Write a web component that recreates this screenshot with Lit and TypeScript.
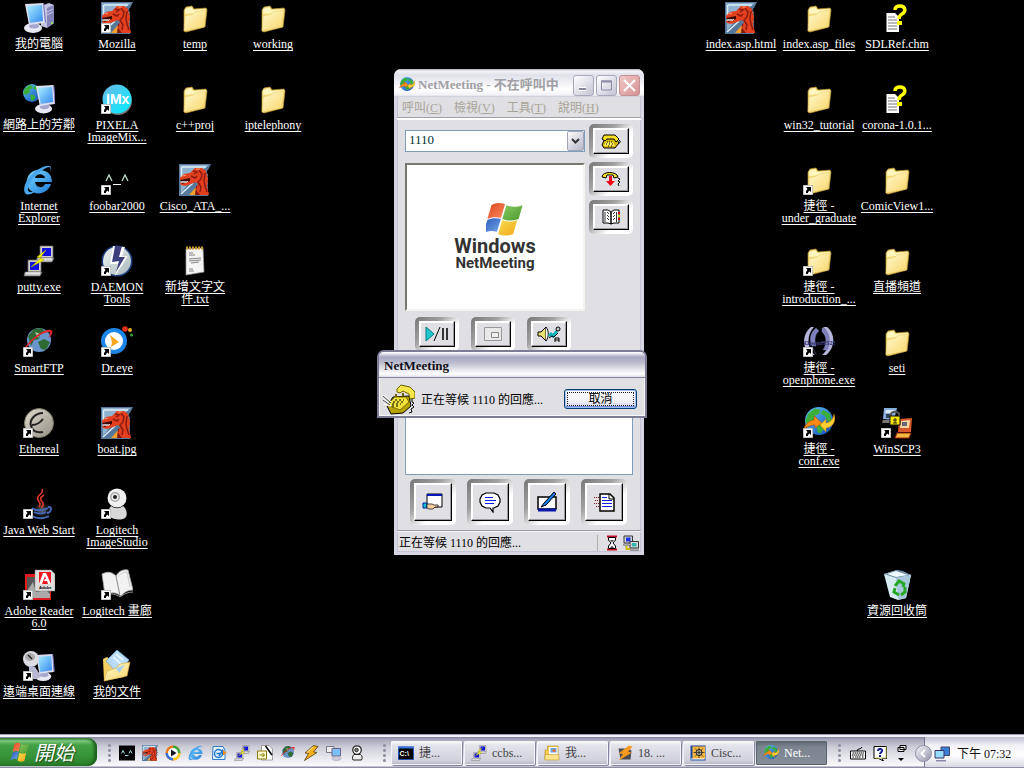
import { LitElement, html, svg, css, nothing, SVGTemplateResult } from "lit";
import { customElement, state } from "lit/decorators.js";

/* ---------- icon artwork, drawn on a 32 x 32 grid ---------- */

const monitor = (x: number, y: number, s: number) => svg`
  <g transform="translate(${x} ${y}) scale(${s})">
    <ellipse cx="9" cy="25" rx="9" ry="5" fill="#e9e9f4"/>
    <ellipse cx="10" cy="23" rx="5" ry="2.500" fill="#a6a6cc"/>
    <path d="M1 1l19-1 1 20-16 2z" fill="#dedef2"/>
    <path d="M3 3l15-1 1 16-13 2z" fill="url(#screen)"/>
    <path d="M19 0l1 0 2 19-1 1z" fill="#7474b8"/>
  </g>`;

const dragon = svg`
  <path d="M0 0h32l-3 6v26H0z" fill="#56789a"/>
  <path d="M1 1h29L13 15 2 29z" fill="#8fb2d0"/>
  <path d="M3 3h24M2.500 3v17M2 30L14 19" stroke="#dcecf8" stroke-width="1.500" fill="none"/>
  <path d="M10 31l8-9 11 4v5z" fill="#f6a02c"/>
  <path d="M16 31l1-9 10-3 3 12z" fill="#7e1a10"/>
  <path d="M1 14l4-4 6-1 5-5 7 0 4 3 2 8-1 8 2 8-9 0-4-5 2-6-2-2-5 2-6 2-4-1-1-2 6-2 1-2-5 1-2 0z" fill="#e2401f"/>
  <path d="M1 16l10-2 0 3-8 3z" fill="#3a0806"/>
  <path d="M2 17l1 2 1-2 1 2 1-2 1 2 1-2 1 1" stroke="#fff" stroke-width=".8" fill="none"/>
  <path d="M14 7l4 1-3 2M20 6l3 4-1 5-3 3 3 5-1 5M26 9l-1 8 1 5 2 6M12 12l4 2 2-2" stroke="#8c1a10" stroke-width="1.500" fill="none"/>
  <path d="M4 12l3-1M17 5l4 0" stroke="#ff9a70" stroke-width="1"/>
  <path d="M29 6l-1 3 2 1-1 3 2 1-2 3 1 2-1 3" stroke="#000" fill="none"/>`;

const folder = svg`
  <path d="M5 29L5 8l2-3 6-1 2 3 12-1 1 2-2 17-19 5z" fill="#f7dc7c" stroke="#b8902c" stroke-width=".7"/>
  <path d="M6 7l6-2 2 3 13-1v3L6 12z" fill="#fff6c0"/>
  <path d="M5 29l1-15 8-2 2-2 11-2-2 17z" fill="url(#fold)" stroke="#e8c45c" stroke-width=".5"/>`;

const globe = (x: number, y: number, r: number) => svg`
  <g transform="translate(${x} ${y}) scale(${r / 10})">
    <circle r="10" fill="url(#sea)"/>
    <path d="M-8-5l5-4 4 1-1 3-3 1 1 3-4 3-4-1zM-2 2l4 0 2 3-3 4-2-1zM3-8l5 3 1 6-3-1-2-4-3-1z" fill="#3cae3a"/>
  </g>`;

const pc = (x: number, y: number) => svg`
  <path d="M${x + 3} ${y}h13v12h-13z" fill="#d4d0c8" stroke="#666" stroke-width=".7"/>
  <path d="M${x + 5} ${y + 2}h9v8h-9z" fill="#1010e0"/>
  <path d="M${x} ${y + 12}h17l-2 4H${x - 1}z" fill="#c8c8c8" stroke="#666" stroke-width=".7"/>
  <path d="M${x + 1} ${y + 13}h14" stroke="#fff"/>`;

const flag = svg`
  <path d="M7 3c4-3 7-2 10-1l-3 13c-3-1-7-1-10 1z" fill="url(#flagR)"/>
  <path d="M18 3c4 2 8 2 12 0l-3 13c-4 2-8 2-12 0z" fill="url(#flagG)"/>
  <path d="M4 17c3-2 7-2 10-1l-3 12c-3-1-6-1-10 1z" fill="url(#flagB)"/>
  <path d="M15 17c4 2 8 2 11 0l-3 13c-3 2-7 2-11 0z" fill="url(#flagY)"/>`;

const ART: Record<string, SVGTemplateResult> = {
  dragon,
  folder,
  flag,
  computer: svg`
    <path d="M18 4l8-3 5 2v18l-7 5-6-2z" fill="#c4c4e4"/>
    <path d="M24 6l7-3v18l-7 5z" fill="#8484b8"/>
    <path d="M24 10l6-3M24 13l6-3" stroke="#c8c8ec"/><circle cx="29" cy="21" r="1" fill="#9f4"/>
    ${monitor(1, 1, 1)}`,
  network: svg`${globe(9, 10, 9)}${monitor(12, 2, 0.95)}`,
  ie: svg`
    <path d="M29 18H12c1 6 8 7 10 2h6c-3 9-13 12-20 7C0 20 4 6 16 6c9 0 13 5 13 12zM12 14h10c-1-5-9-5-10 0z" fill="url(#ieb)" fill-rule="evenodd"/>
    <path d="M27 8c4-8-3-8-13-2C4 13-1 24 2 29c2 3 7 1 11-2-5 2-9 1-8-3C7 15 20 4 26 3c2 0 2 2 1 5z" fill="#4aa6ec"/>`,
  putty: svg`${pc(14, 1)}${pc(2, 15)}<path d="M23 5l-9 7 4 1-10 9 13-7-4-2z" fill="#ff0" stroke="#a8a800" stroke-width=".6"/>`,
  smartftp: svg`<circle cx="16" cy="14" r="12" fill="#6a94cc"/>
    <path d="M5 10l6-7 8-1 3 4-5 2-1 5-5 1-3 6zM15 16l6-3 6 3-4 8-5-1z" fill="#2f6a34"/>
    <path d="M12 6l5 2-2 4z" fill="#b6cfa8"/>
    <path d="M2 21C8 13 21 2 28 4c3 1 1 6-3 8 2-3 3-6 1-6C18 6 9 15 3 22z" fill="#e02428"/>`,
  ethereal: svg`<circle cx="16" cy="16" r="14.500" fill="url(#stone)" stroke="#776" stroke-width="1"/>
    <path d="M20 6C12 6 6 13 8 19c2 6 7 7 12 6" fill="none" stroke="#222" stroke-width="2"/>
    <path d="M9 18c5 0 8-2 11-6" fill="none" stroke="#222" stroke-width="2"/>`,
  java: svg`<ellipse cx="19" cy="22" rx="11" ry="10" fill="url(#glow)"/>
    <path d="M19 1c3 5-7 6-4 11 2 3 3 4 1 7M21 7c-6 4-3 5-1 8 1 2-1 4-2 4" fill="none" stroke="#e0382e" stroke-width="1.600"/>
    <path d="M9 20c3 3 12 3 16 0M11 24c3 2 9 2 12 0M9 28c5 3 12 3 17 0M25 19c5-1 3 6-1 6" fill="none" stroke="#4467b8" stroke-width="2"/>`,
  adobe: svg`<path d="M2 5h26v26H2z" fill="#e21a1c"/><path d="M4 8h23v21H4z" fill="#555"/>
    <path d="M4 22l6-9 3 10 10-2 4 4v4H4z" fill="#aaa"/>
    <path d="M12 1h16l4 4v17H12z" fill="#ddd" stroke="#888" stroke-width=".5"/>
    <path d="M16 3h12v12H16z" fill="#f01820"/>
    <path d="M20 4h3l5 11h-3l-1-3h-3l1-2h1l-1-3-3 8h-3z" fill="#fff"/>
    <text x="16" y="20" font-family="Liberation Sans" font-weight="700" font-size="4" fill="#000">Adobe</text>`,
  remote: svg`${monitor(12, 4, 0.9)}
    <ellipse cx="8" cy="9" rx="8" ry="8" fill="#dcdce4"/><ellipse cx="7" cy="7" rx="5" ry="4" fill="#aaa"/>
    <path d="M5 5l4 4" stroke="#222" stroke-width="1.500"/><path d="M6 16l6 1 6 9c-3 4-9 4-12 1z" fill="#b8b8d4"/>`,
  imx: svg`<circle cx="17" cy="18" r="14" fill="#777"/><circle cx="16" cy="16" r="14.500" fill="url(#cy)"/>
    <text x="5" y="21" font-family="Liberation Sans" font-weight="700" font-size="14" fill="#fff">IMx</text>`,
  foobar: svg`<path d="M5 17l3-6 3 6M21 17l3-6 3 6" fill="none" stroke="#b8dcc8" stroke-width="1.300"/><path d="M12 20.500h8" stroke="#fff"/>`,
  daemon: svg`<circle cx="16" cy="16" r="15.500" fill="#1d3f80"/><circle cx="16" cy="16" r="14" fill="url(#disc)"/>
    <path d="M12 1l12 1-3 9 6 0L14 31l3-12-8 0z" fill="#fff"/>
    <path d="M14 1h7l-3 11 6 0L15 27l3-11-7 1z" fill="#3c3f7c"/>`,
  dreye: svg`<circle cx="13" cy="15" r="13" fill="#1c86e8"/><circle cx="13" cy="15" r="9" fill="#fff"/>
    <path d="M9 9l9 7-8 5 1-5z" fill="#f4a81c"/><circle cx="24" cy="3" r="2.800" fill="#e83018"/><circle cx="29" cy="4" r="2" fill="#e8b020"/><circle cx="30.500" cy="9" r="1.500" fill="#40a840"/>`,
  webcam: svg`<path d="M10 18c4 3 8 3 12 0 4 3 5 10 2 12-5 3-12 1-15-1-2-4-2-8 1-11z" fill="#d8d8d8"/>
    <circle cx="16" cy="10" r="9.500" fill="#f0f0f0"/><circle cx="14" cy="9" r="5" fill="#aaa"/><circle cx="14" cy="9" r="3.500" fill="#eee"/><circle cx="14" cy="9" r="2" fill="#222"/>`,
  webcamSmall: svg`<path d="M10 19h13c4 3 4 7 2 11H8c-2-4-1-8 2-11z" fill="#eee" stroke="#222" stroke-width="2"/>
    <circle cx="16" cy="10" r="8.500" fill="#fff" stroke="#222" stroke-width="2.500"/><circle cx="15" cy="10" r="3.500" fill="#888" stroke="#222" stroke-width="2"/>`,
  book: svg`<path d="M1 5c6-3 10-2 14 2 3-5 7-7 12-6l5 20c-5 0-9 2-12 6-5-4-10-4-16-1z" fill="#f2f2f2" stroke="#aaa" stroke-width=".8"/>
    <path d="M15 7l4 20" stroke="#888"/><path d="M17 8c3-4 6-5 9-5l3 15" fill="none" stroke="#ccc"/>
    <path d="M4 26c7-2 11-1 15 2 4-3 8-5 13-5" fill="none" stroke="#999"/>`,
  documents: svg`<path d="M2 9l4-2 3 2 16 3-2 15L3 31z" fill="#f4cf62"/>
    <path d="M16 0l12 10-11 14L5 11z" fill="#b8dcf8" stroke="#78a8d8" stroke-width=".8"/>
    <path d="M15 4l7 6M12 7l8 7" stroke="#e8f6ff" stroke-width="2"/>
    <path d="M3 31l3-10 9-3 4-4 10-2-3 14z" fill="url(#fold)" stroke="#d8aa40" stroke-width=".6"/>
    <path d="M15 18l9-3-6 8z" fill="#a8d0f4"/>`,
  notepad: svg`<path d="M7 4l17-1 1 24-18 3z" fill="#f4f4f4" stroke="#999" stroke-width=".7"/>
    <path d="M7 3h18" stroke="#c8982c" stroke-width="3" stroke-dasharray="2 1"/>
    <path d="M10 8h4M10 10h6M10 14l12-1M10 16l12-1M12 18l8-1M10 24h4M10 26h5" stroke="#666" stroke-width=".8"/>`,
  chm: svg`<path d="M5 11h9l4 4v15H5z" fill="#fff"/><path d="M5.500 11v19" stroke="#888" fill="none"/>
    <path d="M7 15h7M7 18h9M7 21h9M7 24h9M7 27h9" stroke="#777"/>
    <path d="M14 8c0-4 3-4 5-4 6 0 6 6 2 8-2 1-3 2-3 5" fill="none" stroke="#ff0" stroke-width="3.500"/><path d="M16 19h5v4h-5z" fill="#ff0"/>`,
  openphone: svg`<path d="M8 1C-1 8-1 22 7 29l5 0C3 22 4 8 11 1zM24 1c9 7 8 21-1 28h-4c9-7 9-21 1-28z" fill="#b4b4dc"/>
    <path d="M13 2c-6 5-7 12-4 18h4c-2-6-1-12 3-15zM19 2v4c5 4 5 12 1 18h4c4-7 3-16-3-22zM10 22l3 6" fill="#8080bc" stroke="#6c6ca8" stroke-width=".5"/>
    <text x="1" y="19" font-family="Liberation Serif" font-weight="700" font-size="7" fill="#24245c" stroke="#6868a4" stroke-width=".2">OpenH323</text>`,
  conf: svg`${globe(16, 14, 14)}
    <path d="M1 22c1-6 7-9 10-9l0-4 8 7-7 5v-3c-5 0-8 2-11 4z" fill="#ff8a18" stroke="#a04800" stroke-width=".5"/>
    <path d="M31 7c3 7-2 14-8 14v4l-6-7 6-6v4c5-1 7-4 8-9z" fill="#ffce30" stroke="#b06800" stroke-width=".5"/>`,
  winscp: svg`<path d="M3 1h13l-3 12-11-1z" fill="#86aede"/><path d="M5 3h9l-1 3H4z" fill="#dce9fa"/><path d="M5 7h5v4H5z" fill="#345"/><path d="M2 13l11 0-3 3H1z" fill="#777"/>
    <path d="M18 12l13-1-1 14H17z" fill="#d8572c"/><path d="M20 14l9-1-1 8h-9z" fill="#f8d6a0"/><path d="M21 15h5v4h-5z" fill="#667"/><path d="M16 26h14l-2 5H14z" fill="#f0b83c" stroke="#a02010"/>
    <path d="M10 9V7c1-3 7-3 8 0v3" fill="none" stroke="#555" stroke-width="2"/><path d="M9 9h10v9H9z" fill="#f8e800" stroke="#111"/><path d="M14 11v5M12 13h4M12 16h4" stroke="#222"/>`,
  recycle: svg`<path d="M3 5l13-4 14 5-5 23-8 2-8-3z" fill="#d8ecf4"/><path d="M3 5l12 4 15-3-8-4-6-1z" fill="#6a8ca4"/><path d="M6 5l9-3 12 4-12 2z" fill="#eefaff"/>
    <path d="M15 9l15-3-5 23-8 2z" fill="#a8c8dc"/>
    <path d="M14 17l4-5 5 3-1 3M24 18l0 5-4 3M18 26l-5-3 1-4" fill="none" stroke="#28a828" stroke-width="3"/>`,
  phoneOut: svg`<path d="M4 23l6-9 16-1 2 10-8 7-12 1z" fill="#b8a400" stroke="#000"/><path d="M4 22l8-8 11 0 3 5-9 8z" fill="#f4e23c" stroke="#786c00"/>
    <path d="M14 6l4-4 9 2 5 5 0 6-5 1-1-5-6-3-3 2-3-1z" fill="#f6e84a" stroke="#6c6000"/>
    <path d="M13 14v-3M20 13v-3" stroke="#6c6000" stroke-width="2"/>
    <path d="M12 17h9M10 19h10M9 21h9M9 23h8" stroke="#000" stroke-dasharray="2 2"/>
    <path d="M0 12l8 7M0 16l7 5M1 21l7 2" stroke="#fff" stroke-width="1.500"/><path d="M0 13l8 7M0 17l7 5" stroke="#000" stroke-width=".7"/>
    <path d="M29 16v3l2 1-2 2 2 2-3 2 1 3-3 1" fill="none" stroke="#000"/>`,
  foobarSmall: svg`<path d="M0 1h32v30H0z"/><path d="M5 17l3-6 3 6M20 17l3-6 3 6M12 21h7" fill="none" stroke="#9dd" stroke-width="2"/>`,
  player: svg`<circle cx="16" cy="16" r="15" fill="#f07818"/><path d="M16 1a15 15 0 0 1 15 15H16z" fill="#38a838"/><path d="M16 31a15 15 0 0 1-15-15H16z" fill="#3870d8"/><path d="M31 16a15 15 0 0 1-15 15V16z" fill="#f8c820"/>
    <circle cx="16" cy="16" r="10" fill="#fff"/><path d="M12 9l11 7-11 7z" fill="#112"/>`,
  mailer: svg`<path d="M4 3h20l4 8v18H3z" fill="#e8f4ff" stroke="#2f7cc8" stroke-width="2"/><circle cx="15" cy="17" r="8" fill="none" stroke="#1c78d0" stroke-width="3"/><path d="M11 17h9M16 22l8-13" stroke="#1c78d0" stroke-width="3"/><path d="M24 10l7 6-7 5z" fill="#f08a18"/>`,
  script: svg`<path d="M9 1h15l7 7v22H9z" fill="#fff" stroke="#555"/><path d="M1 12h18v16H1z" fill="#fffbd0" stroke="#887800" stroke-width="2"/><path d="M5 20h10M11 16l4 4-4 4" fill="none" stroke="#887800" stroke-width="2"/><path d="M17 2l13 18" stroke="#000" stroke-width="3"/>`,
  winamp: svg`<path d="M21 1l9 2-9 11 7 1L3 31l8-14-7-1z" fill="#f8b020" stroke="#4c3408" stroke-width="1.500"/><path d="M20 4L8 15" stroke="#fff0a0" stroke-width="2"/>`,
  winampDark: svg`<path d="M3 7h20l6 4-2 18H7z" fill="#4a4a50"/><path d="M24 1l7 2-9 11 8 1L3 31l9-13-9-1z" fill="#f89a20"/>`,
  remoteSmall: svg`<path d="M1 3h15v12H1z" fill="#eee" stroke="#778" stroke-width="2"/><path d="M12 7h17v15H12z" fill="#7cc0f8" stroke="#668" stroke-width="2"/><ellipse cx="21" cy="27" rx="9" ry="4" fill="#ccd" stroke="#99a"/>`,
  console: svg`<path d="M1 4h30v25H1z" fill="#000" stroke="#2254b0" stroke-width="2"/><path d="M0 3h32v4H0z" fill="#3a74d8"/><text x="3" y="22" font-family="Liberation Sans" font-weight="700" font-size="14" fill="#fff">C:\\</text>`,
  docFolder: svg`<path d="M2 10h5V2h21v27H2z" fill="#f8cc50" stroke="#a87810"/><path d="M10 4h17v16H10z" fill="#fff"/><path d="M13 6h12v9H13z" fill="#68a8e8"/><circle cx="20" cy="11" r="3" fill="#e86838"/><path d="M2 19h28v11H2z" fill="#fce38c" stroke="#b88818"/>`,
  cisco: svg`<path d="M1 1h30v30H1z" fill="#1c4a9c"/><path d="M5 3h25v25H5z" fill="#f8b840"/><circle cx="18" cy="15" r="6" fill="#fff4c0" stroke="#222" stroke-width="2"/><path d="M18 5v21M7 15h22M10 7l16 16M26 7L10 23" stroke="#222" stroke-width="1.500"/><path d="M2 28h27" stroke="#fff" stroke-width="2"/>`,
  keyboard: svg`<path d="M1 12h30v16H1z" fill="#fff" stroke="#000" stroke-width="2"/><path d="M5 16h24M4 20h24M5 24h3M10 24h12M24 24h4" stroke="#000" stroke-width="2" stroke-dasharray="3 1"/><path d="M14 12c0-6 8-2 10-8" fill="none" stroke="#000" stroke-width="2"/>`,
  help: svg`<path d="M4 3h25v24h-9l3 5-10-5H4z" fill="#fff" stroke="#000" stroke-width="2"/><path d="M28 3v23H5" stroke="#cc6" stroke-width="2" fill="none"/><path d="M12 12c0-6 9-5 8 0-1 3-4 3-4 6M16 20v4" fill="none" stroke="#101890" stroke-width="4"/>`,
  tray: svg`<path d="M14 2h17v17H14z" fill="#3a80d8" stroke="#446" stroke-width="2"/><path d="M2 9h18v15H2z" fill="#98dcff" stroke="#336" stroke-width="2"/><path d="M4 28h20v3H4z" fill="#88a"/>`,
  hourglass: svg`<path d="M6 3h20M6 29h20" stroke="#c01020" stroke-width="4"/><path d="M9 5h14v5l-5 6 5 6v5H9v-5l5-6-5-6z" fill="#fff" stroke="#000" stroke-width="2"/><path d="M12 10h8l-4 5zM12 26l4-5 4 5z" fill="#555"/>`,
  link: svg`<path d="M2 2h17v14H2z" fill="#d8d8d8" stroke="#333" stroke-width="2"/><path d="M6 5h9v8H6z" fill="#1830e8"/><path d="M14 13h17v13H14z" fill="#ddd" stroke="#333" stroke-width="2"/><path d="M18 16h9v7h-9z" fill="#30b8b0"/><path d="M1 18h15v3H1zM15 28h16v3H15z" fill="#ccc" stroke="#555"/><path d="M7 22v6h7" fill="none" stroke="#c8c000" stroke-width="4"/>`,
};

/* ---------- toolbar glyphs, drawn on their own small grids ---------- */

const GLYPH: Record<string, { w: number; h: number; art: SVGTemplateResult }> = {
  call: { w: 20, h: 16, art: svg`<path d="M1 12l3-7h11l3 5-4 5H3z" fill="#d8b800" stroke="#000"/><path d="M1 6l2-4h11l4 4-3 3-2-3H6L4 8z" fill="#f8e020" stroke="#000"/><path d="M5 9h7l2 4H3z" fill="#f8ec60"/><path d="M6 9h1M8 9h1M10 9h1M5 11h1M8 11h1M11 11h1M7 13h1M10 13h1" stroke="#000"/><path d="M18 7l1.500 2L17 11" fill="none" stroke="#000"/>` },
  hangup: { w: 20, h: 16, art: svg`<path d="M1 6c0-6 15-6 16 0l-4 1-1-3H6L5 7z" fill="#f8e020" stroke="#000"/><path d="M8 5h3v5h3l-4.500 5L5 10h3z" fill="#f00818"/><path d="M17 7l2 1-2 2 2 1-2 2 1 2" fill="none" stroke="#000"/>` },
  directory: { w: 18, h: 16, art: svg`<path d="M1 1h5l3 2 3-2h5v13h-5l-3 1-3-1H1z" fill="#fff" stroke="#000"/><path d="M9 3v12" stroke="#000" stroke-width="1.500"/><path d="M3 3v10M5 3l2 2M5 6l2 2M5 9l2 2M13 3l-2 2M13 6l-2 2M13 9l-2 2M14.500 3v10" stroke="#000" stroke-width=".8"/><path d="M17 3v2M17 9v2" stroke="#c00" stroke-width="2"/><path d="M17 6v2" stroke="#cc0" stroke-width="2"/>` },
  play: { w: 24, h: 16, art: svg`<path d="M1 1v14l8-7z" fill="#20c8d0"/><path d="M1 1v14l8-7z" fill="none" stroke="#047880"/><path d="M9 15L15 1" stroke="#000"/><path d="M18 2v12M22 2v12" stroke="#333" stroke-width="2"/>` },
  pip: { w: 18, h: 14, art: svg`<path d="M.500.500h17v13H.500z" fill="#e8e8e8" stroke="#999"/><path d="M7.500 5.500h7v5h-7z" fill="#eee" stroke="#888"/>` },
  audio: { w: 24, h: 16, art: svg`<path d="M1 6l3 0 5-5v14l-5-5H1z" fill="#e8e070" stroke="#000"/><path d="M9 1c3 4 3 10 0 14" fill="#fff" stroke="#000"/><path d="M12 10l2-2 2 2 4-5" fill="none" stroke="#10b0b8" stroke-width="3"/><path d="M12 12l3-2 2 1 4-4" fill="none" stroke="#000"/><circle cx="21" cy="3" r="2" fill="#ccc" stroke="#000"/><path d="M18 16v-4h4v4M18 14h4" fill="none" stroke="#000"/>` },
  share: { w: 22, h: 18, art: svg`<path d="M5 1h15v13H5z" fill="#fff" stroke="#000"/><path d="M5 2h15" stroke="#0818b8" stroke-width="2"/><path d="M1 10h4v5H1z" fill="#10c0d0" stroke="#0020a0"/><path d="M5 11l5 0 2 1h4v2h-3l-2 2H7l-2-1z" fill="#f8d0a0" stroke="#000" stroke-width=".7"/>` },
  chat: { w: 22, h: 22, art: svg`<path d="M7 2h8l4 2 2 4v3l-2 4-4 2h-1v4l-3-4H7l-4-2-2-4V8l2-4z" fill="#fff" stroke="#000" stroke-width="1.200"/><path d="M6 6.500h8M6 9.500h11M6 12.500h9" stroke="#1020f0"/>` },
  board: { w: 22, h: 22, art: svg`<path d="M2 6h18v12H2z" fill="#fff" stroke="#000" stroke-width="1.500"/><path d="M2 19h18" stroke="#0818a8" stroke-width="3"/><path d="M18 1L8 12l-3 4 5-2L20 3z" fill="#1878f0" stroke="#000"/>` },
  transfer: { w: 22, h: 20, art: svg`<path d="M7 2h10l4 4v13H7z" fill="#fff" stroke="#000" stroke-width="1.500"/><path d="M16 2v5h5" fill="none" stroke="#000"/><path d="M9 5.500h5M9 8.500h10M9 11.500h10M9 14.500h10" stroke="#1020f0"/><path d="M1 5.500h6M2 8.500h5M1 11.500h6M3 14.500h4" stroke="#801818" stroke-dasharray="1 1"/>` },
};

const art = (name: string, cls = "i32") => svg`
  <svg class=${cls} viewBox="0 0 32 32" aria-hidden="true">${ART[name]}</svg>`;

const glyph = (name: string) => {
  const g = GLYPH[name];
  return svg`<svg width=${g.w} height=${g.h} viewBox="0 0 ${g.w} ${g.h}" aria-hidden="true">${g.art}</svg>`;
};

/* ---------- desktop data ---------- */

interface Shortcut { icon: string; lines: string[]; link?: boolean; row?: number }

const s = (icon: string, text: string, link = false, row?: number): Shortcut => ({
  icon, lines: text.split("|"), link, row,
});

const LEFT: Shortcut[][] = [
  [
    s("computer", "我的電腦"), s("network", "網路上的芳鄰"), s("ie", "Internet|Explorer"),
    s("putty", "putty.exe"), s("smartftp", "SmartFTP", true), s("ethereal", "Ethereal", true),
    s("java", "Java Web Start", true), s("adobe", "Adobe Reader|6.0", true), s("remote", "遠端桌面連線", true),
  ],
  [
    s("dragon", "Mozilla", true), s("imx", "PIXELA|ImageMix...", true), s("foobar", "foobar2000", true),
    s("daemon", "DAEMON|Tools", true), s("dreye", "Dr.eye", true), s("dragon", "boat.jpg"),
    s("webcam", "Logitech|ImageStudio", true), s("book", "Logitech 畫廊", true), s("documents", "我的文件"),
  ],
  [s("folder", "temp"), s("folder", "c++proj"), s("dragon", "Cisco_ATA_..."), s("notepad", "新增文字文|件.txt")],
  [s("folder", "working"), s("folder", "iptelephony")],
];

const RIGHT: Shortcut[][] = [
  [s("dragon", "index.asp.html")],
  [
    s("folder", "index.asp_files"), s("folder", "win32_tutorial"), s("folder", "捷徑 -|under_graduate", true),
    s("folder", "捷徑 -|introduction_...", true), s("openphone", "捷徑 -|openphone.exe", true), s("conf", "捷徑 -|conf.exe", true),
  ],
  [
    s("chm", "SDLRef.chm"), s("chm", "corona-1.0.1..."), s("folder", "ComicView1..."),
    s("folder", "直播頻道"), s("folder", "seti"), s("winscp", "WinSCP3", true), s("recycle", "資源回收筒", false, 8),
  ],
];

const QUICK: [string, string][] = [
  ["foobarSmall", "foobar2000"], ["dragon", "Mozilla"], ["player", "Media Player"], ["ie", "Internet Explorer"],
  ["mailer", "Outlook Express"], ["putty", "PuTTY"], ["script", "Editor"], ["smartftp", "SmartFTP"],
  ["winamp", "Winamp"], ["remoteSmall", "Remote Desktop"], ["webcamSmall", "Logitech"],
];

const TASKS: [string, string][] = [
  ["console", "捷..."], ["putty", "ccbs..."], ["docFolder", "我..."],
  ["winampDark", "18. ..."], ["cisco", "Cisc..."], ["conf", "Net..."],
];

const MENUS: [string, string][] = [["呼叫", "C"], ["檢視", "V"], ["工具", "T"], ["說明", "H"]];

@customElement("app-root")
export class AppRoot extends LitElement {
  @state() private dialogOpen = true;
  @state() private activeTask = 5;

  static styles = css`
    :host {
      display: flex;
      flex-direction: column;
      height: 100vh;
      overflow: hidden;
      background: #000;
      color: #000;
      font: 12px/12px "Liberation Serif", "Noto Sans CJK TC", serif;
    }
    * { box-sizing: border-box; }
    button, select { font: inherit; color: inherit; margin: 0; padding: 0; cursor: default; }
    svg { display: block; flex: none; }
    .defs { position: absolute; width: 0; height: 0; }
    .i32 { width: 32px; height: 32px; }
    .i16 { width: 16px; height: 16px; }
    .i20 { width: 20px; height: 20px; }

    /* desktop */
    .desktop { position: relative; flex: 1; min-height: 0; display: flex; justify-content: space-between; }
    .side { display: flex; }
    .side.right { margin-right: 88px; }
    .column { display: grid; grid-auto-rows: 81px; grid-template-columns: 78px; align-content: start; }
    .shortcut {
      display: flex; flex-direction: column; align-items: center; gap: 4px;
      padding-top: 2px; color: #fff; white-space: nowrap; text-align: center;
      text-decoration: none;
    }
    .name { display: flex; flex-direction: column; align-items: center; }
    .name span { text-decoration: underline; text-underline-offset: 2px; text-decoration-skip-ink: none; }
    .pic { position: relative; }
    .badge { position: absolute; left: 0; top: 21px; width: 10px; height: 10px; }

    /* windows */
    .window { position: absolute; border-radius: 7px 7px 0 0; background: #e0dfe3; }
    .main { left: 394px; top: 69px; width: 250px; border: 3px solid #d6d6e2; border-top: 0; box-shadow: inset 0 0 0 1px #c4c4d4; }
    .title {
      display: flex; align-items: center; font-weight: 700; font-size: 13px; line-height: 16px; margin: 0;
    }
    .main .title {
      height: 28px; margin: 0 -3px; padding: 4px 4px 0 5px; gap: 3px; color: #a0a0a4;
      border-radius: 7px 7px 0 0;
      background: linear-gradient(#a8a8b8 0, #f4f4f8 2px, #e0e0ea 6px, #fff 20px, #f2f2f6 26px, #c8c8d6 28px);
    }
    .main .title h1 { flex: 1; font: inherit; margin: 0; white-space: nowrap; }
    .caption { display: flex; gap: 2px; }
    .caption button {
      width: 21px; height: 21px; border: 1px solid #a8a8bc; border-radius: 3px;
      background: linear-gradient(135deg, #fff, #c4c4d4); display: grid; place-items: center;
    }
    .caption .close { border-color: #c09098; background: linear-gradient(135deg, #f0c8c8, #d89090); }
    .menu { display: flex; height: 23px; align-items: center; border-bottom: 2px solid #fff; box-shadow: inset 0 -1px #a0a0a8; padding: 0; }
    .menu button { border: 0; background: none; padding: 0 7px 0 5px; color: #a8a498; white-space: nowrap; line-height: 18px; }
    .content { padding: 4px 8px 5px; }
    .top { display: grid; grid-template-columns: 1fr 44px; column-gap: 4px; align-items: start; }
    .feed { display: flex; flex-direction: column; padding-top: 6px; gap: 11px; }
    .combo { position: relative; display: block; }
    .combo select {
      appearance: none; display: block; width: 100%; height: 22px; border: 1px solid #7f9db9; border-radius: 0;
      background: #fff; padding: 0 20px 3px 3px; font-size: 13px; color: #003034;
    }
    .arrow {
      position: absolute; right: 1px; top: 1px; width: 17px; height: 20px; pointer-events: none;
      border: 1px solid #a4a4b8; border-radius: 2px; display: grid; place-items: center;
      background: linear-gradient(135deg, #fff, #b4b4c8);
    }
    .video {
      height: 148px; background: #fff; border: 2px solid; border-color: #77776e #f4f3ee #f4f3ee #77776e;
      display: flex; flex-direction: column; align-items: center; padding-top: 37px; color: #333;
      font-family: Roboto, "Liberation Sans", sans-serif; font-weight: 700;
    }
    .brandflag { width: 38px; height: 34px; margin-left: 20px; }
    .brand { font-size: 20px; line-height: 20px; }
    .product { font-size: 15px; line-height: 15px; }
    .stack { display: flex; flex-direction: column; gap: 4px; }
    .bevel {
      border: 0; border-radius: 5px; padding: 4px; display: block; width: 44px; height: 34px;
      background: linear-gradient(135deg, #787878, #a0a0a0 35%, #d4d4d4 50%, #fff 65%);
    }
    .face {
      display: grid; place-items: center; width: 100%; height: 100%; background: #e0dfe3;
      border: 1px solid; border-color: #fff #000 #000 #fff; box-shadow: inset -1px -1px #9c9ca0, inset 1px 1px #fff;
    }
    .bevel.large { width: 46px; height: 46px; }
    .media { display: flex; gap: 12px; padding: 6px 10px 0; }
    .people { height: 104px; margin: 20px 0 4px; padding: 0; list-style: none; background: #fff; border: 1px solid #7f9db9; }
    .tools { display: flex; gap: 11px; padding: 0 5px; }
    .status {
      display: flex; align-items: center; height: 22px; padding: 2px 2px 0; border-top: 1px solid #9c9ca4;
      box-shadow: inset 0 1px #f4f4f8; gap: 4px;
    }
    .status span { flex: 1; white-space: nowrap; }
    .status .cell { display: flex; gap: 3px; padding-left: 6px; border-left: 1px solid #b0b0a8; }

    .dialog {
      left: 377px; top: 350px; width: 270px; border: 2px solid #7c7c94; padding: 0; margin: 0;
      border-radius: 7px 7px 0 0; box-shadow: inset 0 0 0 1px #f8f8fc;
    }
    .dialog .title {
      height: 26px; padding: 3px 5px 0; color: #101018; border-radius: 5px 5px 0 0; border-bottom: 1px solid #8484a0;
      background: linear-gradient(#fff 0, #f4f4fa 1px, #a8a8c4 5px, #b8b8cc 10px, #fff 22px, #dcdce6 25px);
    }
    .prompt { display: flex; align-items: center; gap: 6px; padding: 5px 8px 1px 4px; height: 38px; white-space: nowrap; }
    .prompt p { flex: 1; margin: 0; padding-top: 2px; }
    .cancel {
      width: 73px; height: 20px; border: 1px solid #003c74; border-radius: 3px;
      background: linear-gradient(#fff, #f0f0f6 60%, #d0d0e0); box-shadow: inset 0 0 0 1px #a8c0f0, inset 0 -2px #6c8ce0;
      outline: 1px dotted #222; outline-offset: -4px;
    }

    /* taskbar */
    .taskbar {
      flex: none; height: 34px; display: flex; align-items: stretch; color: #222; position: relative;
      background: linear-gradient(#9c9cb4 0 1px, #f4f4f8 1px 3px, #8a8aa6 3px 4px, #a4a4b8 5px, #cdcdd8 13px, #e8e8ee 24px, #fafafc 32px, #8c8ca4 33px);
    }
    .start {
      margin: 4px 10px 2px 0; width: 97px; flex: none; border: 0; border-radius: 0 9px 9px 0; display: flex; align-items: center;
      gap: 4px; padding-left: 10px; color: #fff; font: italic 20px/24px "Noto Sans CJK TC", sans-serif; text-shadow: 1px 1px 1px #1c4c1c;
      background: linear-gradient(#3c8c3c, #7cc87c 3px, #44a044 7px, #389438 18px, #287c28); box-shadow: inset -3px 0 3px #1c601c;
    }
    .grip {
      align-self: center; margin-top: 4px; width: 5px; height: 20px; flex: none;
      background: radial-gradient(circle, #9090a4 1px, transparent 2px) 0 0 / 5px 5px;
    }
    .quick { display: flex; align-items: center; gap: 7px; margin: 3px 0 0 7px; flex: none; }
    .quick button, .lang button { border: 0; background: none; width: 16px; height: 16px; }
    .tasks { display: flex; gap: 2px; align-items: flex-start; padding: 7px 0 0 4px; margin-right: auto; }
    .task {
      width: 71px; height: 24px; display: flex; align-items: center; gap: 3px; padding: 0 7px; border: 0; border-radius: 2px; color: #444;
      background: linear-gradient(#fff, #e4e4ec 4px, #d0d0dc 20px, #b0b0c0); box-shadow: inset 0 0 0 1px #f4f4fa, 1px 1px #8484a0; white-space: nowrap;
    }
    .task svg { width: 16px; height: 16px; margin-right: 2px; }
    .task.active { color: #fff; background: linear-gradient(#5c6470, #7c8490 6px, #848c98); box-shadow: inset 0 0 0 1px #5c6470; }
    .middle { margin-left: 17px; flex: none; }
    .lang { display: flex; gap: 6px; align-items: center; margin: 3px 14px 0 8px; flex: none; }
    .tray {
      display: flex; align-items: center; width: 100px; flex: none; padding: 3px 0 0; gap: 7px; margin: 3px 0 1px;
      border-left: 1px solid #76768e; background: linear-gradient(#c0c0d0, #f0f0f6 8px, #fff 18px, #d8d8e4);
    }
    .tray .hide {
      width: 17px; height: 17px; border-radius: 50%; border: 1px solid #8c8ca4; margin-left: -10px; background: linear-gradient(135deg, #f4f4fa, #9494ac);
      display: grid; place-items: center; flex: none;
    }
    .tray svg.i16 { margin-left: -5px; }
    .tray time { white-space: nowrap; color: #111; }
  `;

  private gradients() {
    const g = (id: string, a: string, b: string) => svg`
      <linearGradient id=${id} x1="0" y1="0" x2="1" y2="1"><stop offset="0" stop-color=${a}/><stop offset="1" stop-color=${b}/></linearGradient>`;
    return html`<svg class="defs" aria-hidden="true"><defs>
      ${g("screen", "#a8f0ff", "#3488f0")} ${g("fold", "#fffbd0", "#f8d468")} ${g("sea", "#60c8f8", "#1048b8")}
      ${g("ieb", "#80d8ff", "#1878d8")} ${g("stone", "#e0dcd0", "#948e84")} ${g("cy", "#70b8e8", "#00f0ff")}
      ${g("disc", "#f0f4f4", "#a8b8bc")} ${g("flagR", "#e04820", "#f8885c")} ${g("flagG", "#88c860", "#4c9c30")}
      ${g("flagB", "#2c58b8", "#70a8e8")} ${g("flagY", "#f8dc50", "#f0a818")}
      ${svg`<radialGradient id="glow"><stop offset="0" stop-color="#777"/><stop offset="1" stop-color="#000" stop-opacity="0"/></radialGradient>`}
    </defs></svg>`;
  }

  private shortcut(item: Shortcut) {
    return html`<a class="shortcut" href="#" style=${item.row ? `grid-row:${item.row}` : nothing}>
      <span class="pic">${art(item.icon)}
        ${item.link
          ? html`<svg class="badge" viewBox="0 0 10 10" aria-hidden="true"><path d="M0 0h10v10H0z" fill="#fff" stroke="#888"/><path d="M3 2h5v5L6.500 5.500 5 7v1H3V6l1.500-2z"/></svg>`
          : nothing}
      </span>
      <span class="name">${item.lines.map((l) => html`<span>${l}</span>`)}</span>
    </a>`;
  }

  private bevel(name: string, label: string, large = false) {
    return html`<button class="bevel ${large ? "large" : ""}" aria-label=${label}><span class="face">${glyph(name)}</span></button>`;
  }

  render() {
    return html`
      ${this.gradients()}
      <main class="desktop">
        <nav class="side">${LEFT.map((c) => html`<div class="column">${c.map((i) => this.shortcut(i))}</div>`)}</nav>
        <nav class="side right">${RIGHT.map((c) => html`<div class="column">${c.map((i) => this.shortcut(i))}</div>`)}</nav>

        <section class="window main">
          <header class="title">
            ${art("conf", "i16")}
            <h1>NetMeeting - 不在呼叫中</h1>
            <div class="caption">
              <button aria-label="Minimize"><svg width="13" height="13"><path d="M2 10h7" stroke="#fff" stroke-width="4"/><path d="M2 10h7" stroke="#8888a0" stroke-width="2"/></svg></button>
              <button aria-label="Maximize"><svg width="13" height="13"><path d="M1.500 2h10v9h-10z" fill="none" stroke="#8c8ca8" stroke-width="1"/><path d="M1 2.500h11" stroke="#8c8ca8" stroke-width="2"/></svg></button>
              <button class="close" aria-label="Close"><svg width="13" height="13"><path d="M1 1l11 11M12 1L1 12" stroke="#fff" stroke-width="2"/></svg></button>
            </div>
          </header>
          <div class="menu">${MENUS.map(([t, k]) => html`<button>${t}(<u>${k}</u>)</button>`)}</div>
          <div class="content">
            <div class="top">
              <div class="feed">
                <label class="combo">
                  <select aria-label="Address"><option>1110</option></select>
                  <span class="arrow"><svg width="9" height="6"><path d="M1 1l3.500 3.500L8 1" fill="none" stroke="#333" stroke-width="2"/></svg></span>
                </label>
                <div class="video">
                  <svg class="brandflag" viewBox="3 0 28 32" preserveAspectRatio="none" aria-hidden="true">${ART.flag}</svg>
                  <div class="brand">Windows</div>
                  <div class="product">NetMeeting</div>
                </div>
              </div>
              <div class="stack">
                ${this.bevel("call", "Place call")} ${this.bevel("hangup", "End call")} ${this.bevel("directory", "Directory")}
              </div>
            </div>
            <div class="media">
              ${this.bevel("play", "Start video")} ${this.bevel("pip", "Picture in picture")} ${this.bevel("audio", "Adjust audio")}
            </div>
            <ul class="people" aria-label="Participants"></ul>
            <div class="tools">
              ${this.bevel("share", "Share program", true)} ${this.bevel("chat", "Chat", true)}
              ${this.bevel("board", "Whiteboard", true)} ${this.bevel("transfer", "Transfer files", true)}
            </div>
          </div>
          <footer class="status">
            <span>正在等候 1110 的回應...</span>
            <div class="cell">${art("hourglass", "i16")}${art("link", "i16")}</div>
          </footer>
        </section>

        ${this.dialogOpen
          ? html`<section class="window dialog" role="dialog" aria-label="NetMeeting">
              <h2 class="title">NetMeeting</h2>
              <div class="prompt">
                ${art("phoneOut")}
                <p>正在等候 1110 的回應...</p>
                <button class="cancel" @click=${() => (this.dialogOpen = false)}>取消</button>
              </div>
            </section>`
          : nothing}
      </main>

      <footer class="taskbar">
        <button class="start">${art("flag", "i20")}開始</button>
        <i class="grip"></i>
        <div class="quick">${QUICK.map(([i, l]) => html`<button aria-label=${l}>${art(i, "i16")}</button>`)}</div>
        <i class="grip middle"></i>
        <div class="tasks">
          ${TASKS.map(([i, t], n) => html`<button class="task ${n === this.activeTask ? "active" : ""}" @click=${() => (this.activeTask = n)}>${art(i, "i16")}${t}</button>`)}
        </div>
        <i class="grip"></i>
        <div class="lang">
          <button aria-label="Keyboard">${art("keyboard", "i16")}</button>
          <button aria-label="Help">${art("help", "i16")}</button>
          <button aria-label="Restore"><svg width="16" height="18"><path d="M6 .5h6v4H6zM4 2.500h6v4H4z" fill="#eee" stroke="#000"/><path d="M4 13h6l-3 3z"/></svg></button>
        </div>
        <div class="tray">
          <button class="hide" aria-label="Hide icons"><svg width="9" height="9"><path d="M6 1L2.500 4.500 6 8" fill="none" stroke="#fff" stroke-width="2"/></svg></button>
          ${art("tray", "i16")}
          <time>下午 07:32</time>
        </div>
      </footer>
    `;
  }
}
